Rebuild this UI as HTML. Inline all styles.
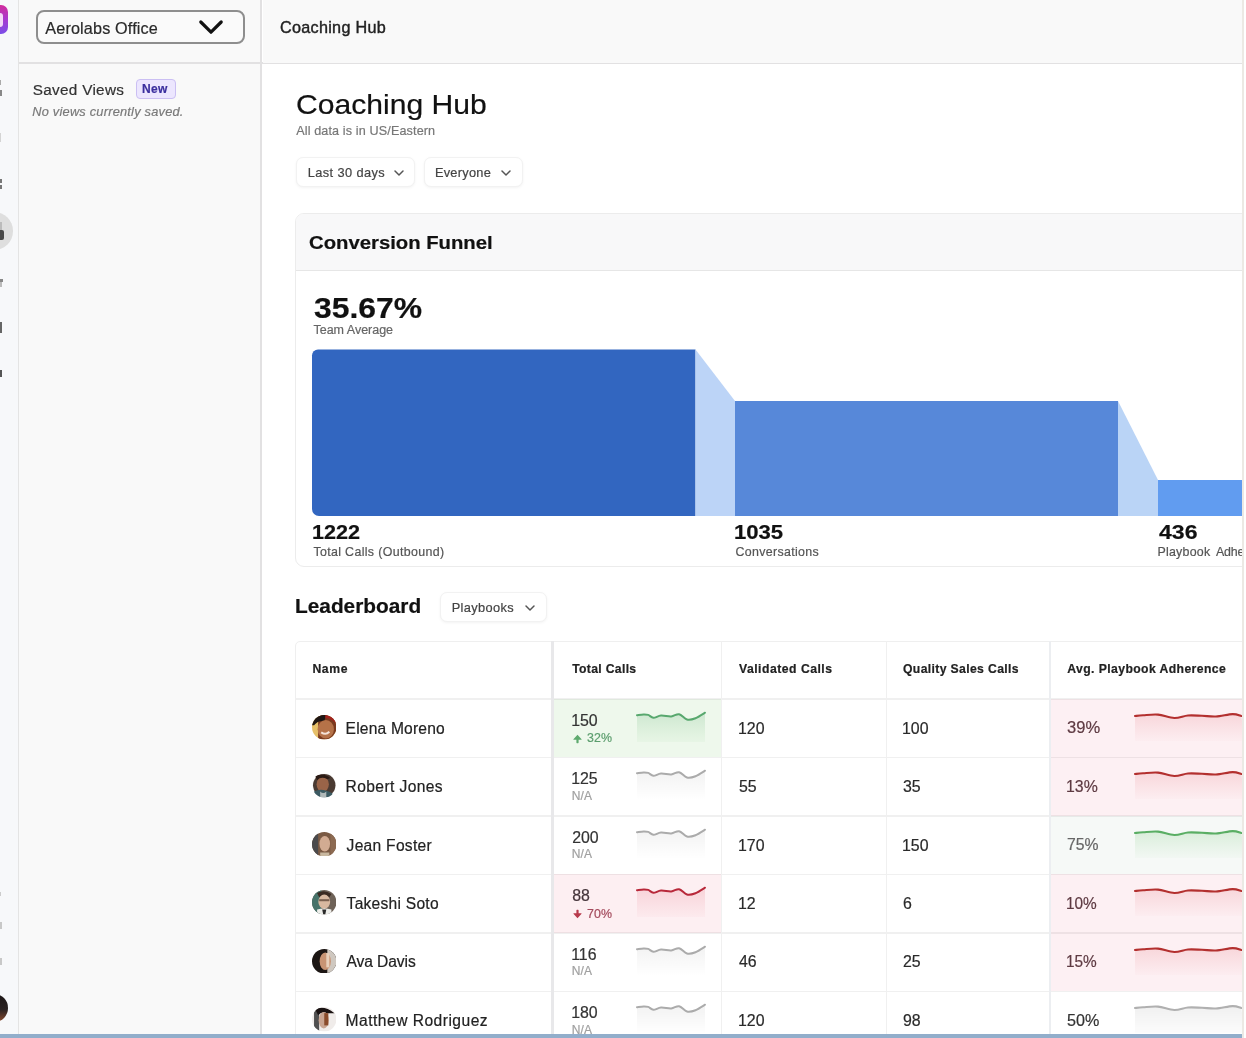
<!DOCTYPE html>
<html><head><meta charset="utf-8"><title>Coaching Hub</title><style>
html,body{margin:0;padding:0;}
body{width:1246px;height:1038px;overflow:hidden;position:relative;background:#fff;font-family:"Liberation Sans",sans-serif;}
#root{position:absolute;left:0;top:0;width:1246px;height:1038px;overflow:hidden;will-change:transform;}
.t{position:absolute;white-space:nowrap;-webkit-text-stroke:0.2px currentColor;}
.b{position:absolute;box-sizing:content-box;}
.av{border-radius:50%;}
.av0{background:radial-gradient(circle at 50% 55%,#c98a60 0%,#a8643c 45%,#7a3b22 70%),#8a4a2a;box-shadow:inset 4px 2px 0 #e0c070;}
.av1{background:radial-gradient(circle at 45% 50%,#8a5a40 0%,#5a3828 45%,#2d2422 70%,#4a6670 100%);}
.av2{background:radial-gradient(ellipse at 50% 50%,#c9a08a 0%,#a57858 35%,#5a3a2a 65%,#3a2a22 100%);}
.av3{background:radial-gradient(ellipse at 50% 50%,#e6d2c0 0%,#b09080 35%,#405a55 70%,#6a8a80 100%);}
.av4{background:radial-gradient(ellipse at 55% 50%,#d6b8a0 0%,#9a7058 35%,#2a201c 70%,#1a1412 100%);}
.av5{background:radial-gradient(ellipse at 55% 55%,#e0d0c8 0%,#a08878 35%,#3a3030 70%,#d8d8d8 100%);}
</style></head>
<body><div id="root">
<div class="b" style="left:0px;top:0px;width:18px;height:1034px;background:#f7f8fa;"></div>
<div class="b" style="left:18px;top:0px;width:1px;height:1034px;background:#e4e4e4;"></div>
<div class="b" style="left:-20px;top:5px;width:28px;height:29px;border-radius:7px;background:linear-gradient(180deg,#d22b9c 0%,#a73ad0 50%,#7a4ee8 100%);"></div>
<div class="b" style="left:0px;top:12.5px;width:2.8px;height:14.5px;background:#f3d8f7;border-radius:0 3px 3px 0;"></div>
<div class="b" style="left:0px;top:80px;width:1px;height:4.5px;background:#aaa;"></div>
<div class="b" style="left:0px;top:90px;width:1.5px;height:5.5px;background:#888;"></div>
<div class="b" style="left:0px;top:133px;width:1px;height:9px;background:#d4d4d4;"></div>
<div class="b" style="left:0px;top:179px;width:1.5px;height:4px;background:#777;"></div>
<div class="b" style="left:0px;top:184.5px;width:1.5px;height:4.5px;background:#777;"></div>
<div class="b" style="left:0px;top:279px;width:3px;height:3px;background:#888;"></div>
<div class="b" style="left:0px;top:282px;width:1.5px;height:5px;background:#bbb;"></div>
<div class="b" style="left:0px;top:322px;width:1.8px;height:11px;background:#666;"></div>
<div class="b" style="left:0px;top:370px;width:2px;height:7px;background:#555;"></div>
<div class="b" style="left:0px;top:892px;width:1px;height:4px;background:#ccc;"></div>
<div class="b" style="left:0px;top:922px;width:1.5px;height:7px;background:#c8c8c8;"></div>
<div class="b" style="left:0px;top:958px;width:1.5px;height:7px;background:#c8c8c8;"></div>
<div class="b" style="left:-24.6px;top:212.2px;width:37.6px;height:37.6px;border-radius:50%;background:#dedede;"></div>
<div class="b" style="left:0px;top:222px;width:2px;height:8px;background:#bbb;"></div>
<div class="b" style="left:0px;top:230px;width:3.5px;height:9.7px;background:#4a4a4a;border-radius:0 2px 2px 0;"></div>
<div class="b" style="left:-19px;top:994px;width:27px;height:28px;border-radius:50%;background:linear-gradient(180deg,#1c1616 0%,#2a2222 55%,#8a4a2e 100%);"></div>
<div class="b" style="left:19px;top:0px;width:242px;height:1034px;background:#f9f9f9;"></div>
<div class="b" style="left:260px;top:0px;width:2px;height:1034px;background:#e2e1e2;"></div>
<div class="b" style="left:19px;top:62.2px;width:1223px;height:1.5px;background:#e2e1e2;"></div>
<div class="b" style="left:36px;top:10px;width:209px;height:33.5px;box-sizing:border-box;border:2px solid #8e8e8e;border-radius:8px;background:#fafafa;"></div>
<div class="t" style="left:45.30px;top:20.29px;font-size:16.2px;line-height:16.2px;font-weight:400;color:#2a2a2a;letter-spacing:0.15px;">Aerolabs Office</div>
<svg class="b" style="left:197px;top:18px" width="30" height="19" viewBox="0 0 30 19"><path d="M3.8 4 L14 14.2 L24.2 4" fill="none" stroke="#111" stroke-width="3.2" stroke-linecap="round" stroke-linejoin="round"/></svg>
<div class="t" style="left:32.70px;top:81.65px;font-size:15.3px;line-height:15.3px;font-weight:400;color:#333;letter-spacing:0.31px;">Saved Views</div>
<div class="b" style="left:135.5px;top:78.5px;width:38px;height:18px;border:1px solid #cbbff3;border-radius:4px;background:#ece6fe;"></div>
<div class="t" style="left:142.00px;top:83.34px;font-size:12.0px;line-height:12.0px;font-weight:700;color:#3b2f9e;letter-spacing:0.33px;">New</div>
<div class="t" style="left:32.30px;top:106.46px;font-size:12.8px;line-height:12.8px;font-weight:400;color:#7a7a7a;font-style:italic;letter-spacing:0.22px;">No views currently saved.</div>
<div class="b" style="left:263px;top:0px;width:979px;height:63px;background:#f9f9f9;"></div>
<div class="t" style="left:279.90px;top:18.79px;font-size:16.2px;line-height:16.2px;font-weight:400;color:#222;letter-spacing:0.30px;-webkit-text-stroke:0.4px #222;">Coaching Hub</div>
<div class="b" style="left:263px;top:64px;width:979px;height:970px;background:#ffffff;"></div>
<div class="t" style="left:295.61px;top:91.24px;font-size:27.6px;line-height:27.6px;font-weight:400;color:#111;transform:scaleX(1.0909);transform-origin:0 0;">Coaching Hub</div>
<div class="t" style="left:296.20px;top:125.13px;font-size:12.6px;line-height:12.6px;font-weight:400;color:#777;letter-spacing:0.13px;">All data is in US/Eastern</div>
<div class="b" style="left:296px;top:157px;width:117px;height:28px;border:1px solid #f2f2f2;border-radius:7px;background:#fff;box-shadow:0 1px 3px rgba(0,0,0,0.05);"></div>
<div class="t" style="left:307.70px;top:166.86px;font-size:12.8px;line-height:12.8px;font-weight:400;color:#444;letter-spacing:0.40px;">Last 30 days</div>
<svg class="b" style="left:393px;top:168px" width="12" height="10" viewBox="0 0 12 10"><path d="M2 3 L6 7 L10 3" fill="none" stroke="#555" stroke-width="1.5" stroke-linecap="round" stroke-linejoin="round"/></svg>
<div class="b" style="left:424px;top:157px;width:97px;height:28px;border:1px solid #f2f2f2;border-radius:7px;background:#fff;box-shadow:0 1px 3px rgba(0,0,0,0.05);"></div>
<div class="t" style="left:434.90px;top:166.86px;font-size:12.8px;line-height:12.8px;font-weight:400;color:#444;letter-spacing:0.27px;">Everyone</div>
<svg class="b" style="left:499.5px;top:168px" width="12" height="10" viewBox="0 0 12 10"><path d="M2 3 L6 7 L10 3" fill="none" stroke="#555" stroke-width="1.5" stroke-linecap="round" stroke-linejoin="round"/></svg>
<div class="b" style="left:295px;top:213px;width:960px;height:352px;border:1.5px solid #ececec;border-radius:9px;background:#fff;overflow:hidden;"><div style="position:absolute;left:0;top:0;right:0;height:56px;background:#f8f8f9;border-bottom:1px solid #e6e6e6;"></div></div>
<div class="t" style="left:308.80px;top:233.66px;font-size:18.6px;line-height:18.6px;font-weight:700;color:#111;transform:scaleX(1.0908);transform-origin:0 0;">Conversion Funnel</div>
<div class="t" style="left:313.50px;top:293.92px;font-size:28.8px;line-height:28.8px;font-weight:700;color:#111;transform:scaleX(1.1065);transform-origin:0 0;">35.67%</div>
<div class="t" style="left:313.50px;top:324.32px;font-size:12.5px;line-height:12.5px;font-weight:400;color:#666;letter-spacing:-0.01px;">Team Average</div>
<svg class="b" style="left:263px;top:340px" width="979" height="190" viewBox="263 340 979 190"><path d="M312 355.5 A6 6 0 0 1 318 349.5 L695.5 349.5 L695.5 516 L319 516 A7 7 0 0 1 312 509 Z" fill="#3266c0"/><path d="M695.5 349.5 L735 401 L735 516 L695.5 516 Z" fill="#bcd4f7"/><rect x="735" y="401" width="383" height="115" fill="#5788d9"/><path d="M1118 401 L1158 480 L1158 516 L1118 516 Z" fill="#bad4f6"/><rect x="1158" y="480" width="90" height="36" fill="#619cf0"/></svg>
<div class="t" style="left:311.70px;top:523.12px;font-size:19.7px;line-height:19.7px;font-weight:700;color:#111;transform:scaleX(1.0969);transform-origin:0 0;">1222</div>
<div class="t" style="left:313.40px;top:545.60px;font-size:12.4px;line-height:12.4px;font-weight:400;color:#555;letter-spacing:0.35px;">Total Calls (Outbound)</div>
<div class="t" style="left:734.48px;top:523.32px;font-size:19.7px;line-height:19.7px;font-weight:700;color:#111;transform:scaleX(1.1226);transform-origin:0 0;">1035</div>
<div class="t" style="left:735.60px;top:545.90px;font-size:12.4px;line-height:12.4px;font-weight:400;color:#555;letter-spacing:0.33px;">Conversations</div>
<div class="t" style="left:1158.50px;top:523.12px;font-size:19.7px;line-height:19.7px;font-weight:700;color:#111;transform:scaleX(1.1703);transform-origin:0 0;">436</div>
<div class="t" style="left:1157.50px;top:545.90px;font-size:12.4px;line-height:12.4px;font-weight:400;color:#555;letter-spacing:0.23px;">Playbook</div>
<div class="t" style="left:1215.90px;top:545.90px;font-size:12.4px;line-height:12.4px;font-weight:400;color:#555;letter-spacing:-0.13px;">Adherence</div>
<div class="t" style="left:295.43px;top:597.38px;font-size:19.4px;line-height:19.4px;font-weight:700;color:#111;transform:scaleX(1.0743);transform-origin:0 0;">Leaderboard</div>
<div class="b" style="left:440px;top:592px;width:105px;height:28px;border:1px solid #f2f2f2;border-radius:7px;background:#fff;box-shadow:0 1px 3px rgba(0,0,0,0.05);"></div>
<div class="t" style="left:451.70px;top:602.16px;font-size:12.8px;line-height:12.8px;font-weight:400;color:#444;letter-spacing:0.38px;">Playbooks</div>
<svg class="b" style="left:523.5px;top:603px" width="12" height="10" viewBox="0 0 12 10"><path d="M2 3 L6 7 L10 3" fill="none" stroke="#555" stroke-width="1.5" stroke-linecap="round" stroke-linejoin="round"/></svg>
<div class="b" style="left:295px;top:641px;width:960px;height:400px;border:1.5px solid #efefef;border-radius:5px;background:#fff;"></div>
<div class="t" style="left:312.40px;top:663.07px;font-size:12.2px;line-height:12.2px;font-weight:700;color:#222;letter-spacing:0.66px;">Name</div>
<div class="t" style="left:572.20px;top:663.07px;font-size:12.2px;line-height:12.2px;font-weight:700;color:#222;letter-spacing:0.32px;">Total Calls</div>
<div class="t" style="left:739.00px;top:663.07px;font-size:12.2px;line-height:12.2px;font-weight:700;color:#222;letter-spacing:0.50px;">Validated Calls</div>
<div class="t" style="left:903.00px;top:663.07px;font-size:12.2px;line-height:12.2px;font-weight:700;color:#222;letter-spacing:0.36px;">Quality Sales Calls</div>
<div class="t" style="left:1067.30px;top:663.07px;font-size:12.2px;line-height:12.2px;font-weight:700;color:#222;letter-spacing:0.41px;">Avg. Playbook Adherence</div>
<div class="b" style="left:553px;top:699.0px;width:168px;height:58.46px;background:#eef8ec;"></div>
<div class="b" style="left:1051px;top:699.0px;width:200px;height:58.46px;background:#fdf0f3;"></div>
<svg class="b" style="left:311.7px;top:715.00px;filter:blur(0.35px)" width="24.5" height="24.5" viewBox="0 0 24 24"><defs><clipPath id="c0"><circle cx="12" cy="12" r="12"/></clipPath></defs><g clip-path="url(#c0)"><rect width="24" height="24" fill="#e6c069"/><rect x="6" width="18" height="24" fill="#7a3a1e"/><path d="M0 0 H14 L12 6 Q6 5 2 10 H0 Z" fill="#1e1614"/><path d="M13 0 H24 V9 Q19 3 13 3 Z" fill="#a3221e"/><ellipse cx="13.5" cy="14" rx="8" ry="9" fill="#b57248"/><path d="M9 17 Q13.5 20 17 16.5" stroke="#f4e2d6" stroke-width="2" fill="none"/></g></svg>
<div class="t" style="left:345.60px;top:720.59px;font-size:15.6px;line-height:15.6px;font-weight:400;color:#222;letter-spacing:0.18px;">Elena Moreno</div>
<div class="t" style="left:571.20px;top:712.74px;font-size:15.9px;line-height:15.9px;font-weight:400;color:#333;">150</div>
<svg class="b" style="left:572px;top:733.50px" width="11" height="10" viewBox="0 0 11 10"><path d="M5.5 0.8 L9.6 5.2 Q9.8 5.8 9.1 5.8 H6.6 V8.6 Q6.6 9.2 6 9.2 H5 Q4.4 9.2 4.4 8.6 V5.8 H1.9 Q1.2 5.8 1.4 5.2 Z" fill="#5eaa6e"/></svg>
<div class="t" style="left:586.90px;top:732.30px;font-size:12.4px;line-height:12.4px;font-weight:400;color:#5c9e6e;letter-spacing:0.16px;">32%</div>
<svg class="b" style="left:634.6px;top:699.00px" width="72" height="46" viewBox="-2 0 72 46"><defs><linearGradient id="g0" x1="0" y1="0" x2="0" y2="1"><stop offset="0" stop-color="rgba(88,168,110,0.22)"/><stop offset="1" stop-color="rgba(120,200,120,0.06)"/></linearGradient></defs><path d="M0.00 16.20 C1.10 16.07 4.73 15.45 6.60 15.40 C8.47 15.35 9.57 15.33 11.20 15.90 C12.83 16.47 14.27 18.70 16.40 18.80 C18.53 18.90 21.03 16.73 24.00 16.50 C26.97 16.27 31.18 17.62 34.20 17.40 C37.22 17.18 39.47 14.68 42.10 15.20 C44.73 15.72 47.27 19.83 50.00 20.50 C52.73 21.17 55.50 20.33 58.50 19.20 C61.50 18.07 66.42 14.62 68.00 13.70 L68 43 L0 43 Z" fill="url(#g0)"/><path d="M0.00 16.20 C1.10 16.07 4.73 15.45 6.60 15.40 C8.47 15.35 9.57 15.33 11.20 15.90 C12.83 16.47 14.27 18.70 16.40 18.80 C18.53 18.90 21.03 16.73 24.00 16.50 C26.97 16.27 31.18 17.62 34.20 17.40 C37.22 17.18 39.47 14.68 42.10 15.20 C44.73 15.72 47.27 19.83 50.00 20.50 C52.73 21.17 55.50 20.33 58.50 19.20 C61.50 18.07 66.42 14.62 68.00 13.70" fill="none" stroke="#58a86e" stroke-width="2" stroke-linecap="round"/></svg>
<div class="t" style="left:738.00px;top:720.64px;font-size:15.9px;line-height:15.9px;font-weight:400;color:#2a2a2a;">120</div>
<div class="t" style="left:902.00px;top:720.64px;font-size:15.9px;line-height:15.9px;font-weight:400;color:#2a2a2a;">100</div>
<div class="t" style="left:1067.30px;top:720.24px;font-size:15.9px;line-height:15.9px;font-weight:400;color:#5e3a42;transform:scaleX(1.0418);transform-origin:0 0;">39%</div>
<svg class="b" style="left:1133.2px;top:699.00px" width="112" height="46" viewBox="-2 0 112 46"><defs><linearGradient id="h0" x1="0" y1="0" x2="0" y2="1"><stop offset="0" stop-color="rgba(220,80,90,0.16)"/><stop offset="1" stop-color="rgba(230,90,100,0.02)"/></linearGradient></defs><path d="M0.00 17.00 C1.33 16.88 4.17 16.53 8.00 16.30 C11.83 16.07 17.78 15.15 23.00 15.60 C28.22 16.05 34.30 18.85 39.30 19.00 C44.30 19.15 48.38 16.87 53.00 16.50 C57.62 16.13 62.33 16.63 67.00 16.80 C71.67 16.97 75.90 17.78 81.00 17.50 C86.10 17.22 93.38 15.18 97.60 15.10 C101.82 15.02 104.85 16.68 106.30 17.00 L110 42 L0 42 Z" fill="url(#h0)"/><path d="M0.00 17.00 C1.33 16.88 4.17 16.53 8.00 16.30 C11.83 16.07 17.78 15.15 23.00 15.60 C28.22 16.05 34.30 18.85 39.30 19.00 C44.30 19.15 48.38 16.87 53.00 16.50 C57.62 16.13 62.33 16.63 67.00 16.80 C71.67 16.97 75.90 17.78 81.00 17.50 C86.10 17.22 93.38 15.18 97.60 15.10 C101.82 15.02 104.85 16.68 106.30 17.00" fill="none" stroke="#b3302f" stroke-width="2.1" stroke-linecap="round"/></svg>
<div class="b" style="left:1051px;top:757.46px;width:200px;height:58.46px;background:#fdf0f3;"></div>
<svg class="b" style="left:311.7px;top:773.46px;filter:blur(0.35px)" width="24.5" height="24.5" viewBox="0 0 24 24"><defs><clipPath id="c1"><circle cx="12" cy="12" r="12"/></clipPath></defs><g clip-path="url(#c1)"><rect width="24" height="24" fill="#fbfbfb"/><circle cx="12" cy="12" r="11" fill="#4a3a32"/><ellipse cx="10.5" cy="11" rx="6" ry="7.5" fill="#9a6448"/><path d="M3 3 Q11 -1 18 5 L15 6 Q9 3 5 7 Z" fill="#2a1a14"/><path d="M2 18 Q10 14 20 20 V24 H2 Z" fill="#3c5a62"/><path d="M8 18 Q11 21 14 18 V24 H8 Z" fill="#b0b8b8"/></g></svg>
<div class="t" style="left:345.60px;top:779.05px;font-size:15.6px;line-height:15.6px;font-weight:400;color:#222;letter-spacing:0.39px;">Robert Jones</div>
<div class="t" style="left:571.20px;top:771.20px;font-size:15.9px;line-height:15.9px;font-weight:400;color:#333;">125</div>
<div class="t" style="left:571.70px;top:789.70px;font-size:12.0px;line-height:12.0px;font-weight:400;color:#a0a0a0;letter-spacing:0.15px;">N/A</div>
<svg class="b" style="left:634.6px;top:757.46px" width="72" height="46" viewBox="-2 0 72 46"><defs><linearGradient id="g1" x1="0" y1="0" x2="0" y2="1"><stop offset="0" stop-color="rgba(0,0,0,0.05)"/><stop offset="1" stop-color="rgba(0,0,0,0.0)"/></linearGradient></defs><path d="M0.00 16.20 C1.10 16.07 4.73 15.45 6.60 15.40 C8.47 15.35 9.57 15.33 11.20 15.90 C12.83 16.47 14.27 18.70 16.40 18.80 C18.53 18.90 21.03 16.73 24.00 16.50 C26.97 16.27 31.18 17.62 34.20 17.40 C37.22 17.18 39.47 14.68 42.10 15.20 C44.73 15.72 47.27 19.83 50.00 20.50 C52.73 21.17 55.50 20.33 58.50 19.20 C61.50 18.07 66.42 14.62 68.00 13.70 L68 43 L0 43 Z" fill="url(#g1)"/><path d="M0.00 16.20 C1.10 16.07 4.73 15.45 6.60 15.40 C8.47 15.35 9.57 15.33 11.20 15.90 C12.83 16.47 14.27 18.70 16.40 18.80 C18.53 18.90 21.03 16.73 24.00 16.50 C26.97 16.27 31.18 17.62 34.20 17.40 C37.22 17.18 39.47 14.68 42.10 15.20 C44.73 15.72 47.27 19.83 50.00 20.50 C52.73 21.17 55.50 20.33 58.50 19.20 C61.50 18.07 66.42 14.62 68.00 13.70" fill="none" stroke="#ababab" stroke-width="2" stroke-linecap="round"/></svg>
<div class="t" style="left:739.00px;top:779.10px;font-size:15.9px;line-height:15.9px;font-weight:400;color:#2a2a2a;">55</div>
<div class="t" style="left:903.00px;top:779.10px;font-size:15.9px;line-height:15.9px;font-weight:400;color:#2a2a2a;">35</div>
<div class="t" style="left:1066.30px;top:778.70px;font-size:15.9px;line-height:15.9px;font-weight:400;color:#5e3a42;transform:scaleX(0.9975);transform-origin:0 0;">13%</div>
<svg class="b" style="left:1133.2px;top:757.46px" width="112" height="46" viewBox="-2 0 112 46"><defs><linearGradient id="h1" x1="0" y1="0" x2="0" y2="1"><stop offset="0" stop-color="rgba(220,80,90,0.16)"/><stop offset="1" stop-color="rgba(230,90,100,0.02)"/></linearGradient></defs><path d="M0.00 17.00 C1.33 16.88 4.17 16.53 8.00 16.30 C11.83 16.07 17.78 15.15 23.00 15.60 C28.22 16.05 34.30 18.85 39.30 19.00 C44.30 19.15 48.38 16.87 53.00 16.50 C57.62 16.13 62.33 16.63 67.00 16.80 C71.67 16.97 75.90 17.78 81.00 17.50 C86.10 17.22 93.38 15.18 97.60 15.10 C101.82 15.02 104.85 16.68 106.30 17.00 L110 42 L0 42 Z" fill="url(#h1)"/><path d="M0.00 17.00 C1.33 16.88 4.17 16.53 8.00 16.30 C11.83 16.07 17.78 15.15 23.00 15.60 C28.22 16.05 34.30 18.85 39.30 19.00 C44.30 19.15 48.38 16.87 53.00 16.50 C57.62 16.13 62.33 16.63 67.00 16.80 C71.67 16.97 75.90 17.78 81.00 17.50 C86.10 17.22 93.38 15.18 97.60 15.10 C101.82 15.02 104.85 16.68 106.30 17.00" fill="none" stroke="#b3302f" stroke-width="2.1" stroke-linecap="round"/></svg>
<div class="b" style="left:1051px;top:815.92px;width:200px;height:58.46px;background:#f6f9f7;"></div>
<svg class="b" style="left:311.7px;top:831.92px;filter:blur(0.35px)" width="24.5" height="24.5" viewBox="0 0 24 24"><defs><clipPath id="c2"><circle cx="12" cy="12" r="12"/></clipPath></defs><g clip-path="url(#c2)"><rect width="24" height="24" fill="#7a5a44"/><rect width="6" height="24" fill="#4a4a4c"/><ellipse cx="12.5" cy="11.5" rx="5.2" ry="7.5" fill="#d2ab92"/><rect x="18" width="6" height="24" fill="#8c6a52"/><path d="M8 20 H17 V24 H8 Z" fill="#c8b8a0"/></g></svg>
<div class="t" style="left:346.60px;top:837.51px;font-size:15.6px;line-height:15.6px;font-weight:400;color:#222;letter-spacing:0.27px;">Jean Foster</div>
<div class="t" style="left:572.20px;top:829.66px;font-size:15.9px;line-height:15.9px;font-weight:400;color:#333;">200</div>
<div class="t" style="left:571.70px;top:848.16px;font-size:12.0px;line-height:12.0px;font-weight:400;color:#a0a0a0;letter-spacing:0.15px;">N/A</div>
<svg class="b" style="left:634.6px;top:815.92px" width="72" height="46" viewBox="-2 0 72 46"><defs><linearGradient id="g2" x1="0" y1="0" x2="0" y2="1"><stop offset="0" stop-color="rgba(0,0,0,0.05)"/><stop offset="1" stop-color="rgba(0,0,0,0.0)"/></linearGradient></defs><path d="M0.00 16.20 C1.10 16.07 4.73 15.45 6.60 15.40 C8.47 15.35 9.57 15.33 11.20 15.90 C12.83 16.47 14.27 18.70 16.40 18.80 C18.53 18.90 21.03 16.73 24.00 16.50 C26.97 16.27 31.18 17.62 34.20 17.40 C37.22 17.18 39.47 14.68 42.10 15.20 C44.73 15.72 47.27 19.83 50.00 20.50 C52.73 21.17 55.50 20.33 58.50 19.20 C61.50 18.07 66.42 14.62 68.00 13.70 L68 43 L0 43 Z" fill="url(#g2)"/><path d="M0.00 16.20 C1.10 16.07 4.73 15.45 6.60 15.40 C8.47 15.35 9.57 15.33 11.20 15.90 C12.83 16.47 14.27 18.70 16.40 18.80 C18.53 18.90 21.03 16.73 24.00 16.50 C26.97 16.27 31.18 17.62 34.20 17.40 C37.22 17.18 39.47 14.68 42.10 15.20 C44.73 15.72 47.27 19.83 50.00 20.50 C52.73 21.17 55.50 20.33 58.50 19.20 C61.50 18.07 66.42 14.62 68.00 13.70" fill="none" stroke="#ababab" stroke-width="2" stroke-linecap="round"/></svg>
<div class="t" style="left:738.00px;top:837.56px;font-size:15.9px;line-height:15.9px;font-weight:400;color:#2a2a2a;">170</div>
<div class="t" style="left:902.00px;top:837.56px;font-size:15.9px;line-height:15.9px;font-weight:400;color:#2a2a2a;">150</div>
<div class="t" style="left:1067.30px;top:837.16px;font-size:15.9px;line-height:15.9px;font-weight:400;color:#666;transform:scaleX(0.9913);transform-origin:0 0;">75%</div>
<svg class="b" style="left:1133.2px;top:815.92px" width="112" height="46" viewBox="-2 0 112 46"><defs><linearGradient id="h2" x1="0" y1="0" x2="0" y2="1"><stop offset="0" stop-color="rgba(100,190,100,0.2)"/><stop offset="1" stop-color="rgba(120,200,120,0.03)"/></linearGradient></defs><path d="M0.00 17.00 C1.33 16.88 4.17 16.53 8.00 16.30 C11.83 16.07 17.78 15.15 23.00 15.60 C28.22 16.05 34.30 18.85 39.30 19.00 C44.30 19.15 48.38 16.87 53.00 16.50 C57.62 16.13 62.33 16.63 67.00 16.80 C71.67 16.97 75.90 17.78 81.00 17.50 C86.10 17.22 93.38 15.18 97.60 15.10 C101.82 15.02 104.85 16.68 106.30 17.00 L110 42 L0 42 Z" fill="url(#h2)"/><path d="M0.00 17.00 C1.33 16.88 4.17 16.53 8.00 16.30 C11.83 16.07 17.78 15.15 23.00 15.60 C28.22 16.05 34.30 18.85 39.30 19.00 C44.30 19.15 48.38 16.87 53.00 16.50 C57.62 16.13 62.33 16.63 67.00 16.80 C71.67 16.97 75.90 17.78 81.00 17.50 C86.10 17.22 93.38 15.18 97.60 15.10 C101.82 15.02 104.85 16.68 106.30 17.00" fill="none" stroke="#5aae64" stroke-width="2.1" stroke-linecap="round"/></svg>
<div class="b" style="left:553px;top:874.38px;width:168px;height:58.46px;background:#fdeff2;"></div>
<div class="b" style="left:1051px;top:874.38px;width:200px;height:58.46px;background:#fdf0f3;"></div>
<svg class="b" style="left:311.7px;top:890.38px;filter:blur(0.35px)" width="24.5" height="24.5" viewBox="0 0 24 24"><defs><clipPath id="c3"><circle cx="12" cy="12" r="12"/></clipPath></defs><g clip-path="url(#c3)"><rect width="24" height="24" fill="#6e6258"/><rect width="9" height="24" fill="#47736a"/><path d="M5 3 Q12 -1 19 4 L17 7 Q12 4 7 7 Z" fill="#3a2a22"/><ellipse cx="12" cy="11.5" rx="5.8" ry="7" fill="#d8b8a0"/><rect x="7" y="9" width="10" height="2" fill="#7a6050"/><path d="M5 19 Q12 17 19 19 V24 H5 Z" fill="#eeeeea"/><path d="M10 19 H14 L13 24 H11 Z" fill="#2a2a2a"/></g></svg>
<div class="t" style="left:346.60px;top:895.97px;font-size:15.6px;line-height:15.6px;font-weight:400;color:#222;letter-spacing:0.25px;">Takeshi Soto</div>
<div class="t" style="left:572.20px;top:888.12px;font-size:15.9px;line-height:15.9px;font-weight:400;color:#45353b;">88</div>
<svg class="b" style="left:572px;top:908.88px" width="11" height="10" viewBox="0 0 11 10"><path d="M5.5 9.2 L9.6 4.8 Q9.8 4.2 9.1 4.2 H6.6 V1.4 Q6.6 0.8 6 0.8 H5 Q4.4 0.8 4.4 1.4 V4.2 H1.9 Q1.2 4.2 1.4 4.8 Z" fill="#b83a4c"/></svg>
<div class="t" style="left:586.90px;top:908.08px;font-size:12.4px;line-height:12.4px;font-weight:400;color:#a44b5d;letter-spacing:0.16px;">70%</div>
<svg class="b" style="left:634.6px;top:874.38px" width="72" height="46" viewBox="-2 0 72 46"><defs><linearGradient id="g3" x1="0" y1="0" x2="0" y2="1"><stop offset="0" stop-color="rgba(220,60,80,0.16)"/><stop offset="1" stop-color="rgba(230,80,100,0.03)"/></linearGradient></defs><path d="M0.00 16.20 C1.10 16.07 4.73 15.45 6.60 15.40 C8.47 15.35 9.57 15.33 11.20 15.90 C12.83 16.47 14.27 18.70 16.40 18.80 C18.53 18.90 21.03 16.73 24.00 16.50 C26.97 16.27 31.18 17.62 34.20 17.40 C37.22 17.18 39.47 14.68 42.10 15.20 C44.73 15.72 47.27 19.83 50.00 20.50 C52.73 21.17 55.50 20.33 58.50 19.20 C61.50 18.07 66.42 14.62 68.00 13.70 L68 43 L0 43 Z" fill="url(#g3)"/><path d="M0.00 16.20 C1.10 16.07 4.73 15.45 6.60 15.40 C8.47 15.35 9.57 15.33 11.20 15.90 C12.83 16.47 14.27 18.70 16.40 18.80 C18.53 18.90 21.03 16.73 24.00 16.50 C26.97 16.27 31.18 17.62 34.20 17.40 C37.22 17.18 39.47 14.68 42.10 15.20 C44.73 15.72 47.27 19.83 50.00 20.50 C52.73 21.17 55.50 20.33 58.50 19.20 C61.50 18.07 66.42 14.62 68.00 13.70" fill="none" stroke="#b8283a" stroke-width="2" stroke-linecap="round"/></svg>
<div class="t" style="left:738.00px;top:896.02px;font-size:15.9px;line-height:15.9px;font-weight:400;color:#2a2a2a;">12</div>
<div class="t" style="left:903.00px;top:896.02px;font-size:15.9px;line-height:15.9px;font-weight:400;color:#2a2a2a;">6</div>
<div class="t" style="left:1066.33px;top:895.62px;font-size:15.9px;line-height:15.9px;font-weight:400;color:#5e3a42;transform:scaleX(0.9682);transform-origin:0 0;">10%</div>
<svg class="b" style="left:1133.2px;top:874.38px" width="112" height="46" viewBox="-2 0 112 46"><defs><linearGradient id="h3" x1="0" y1="0" x2="0" y2="1"><stop offset="0" stop-color="rgba(220,80,90,0.16)"/><stop offset="1" stop-color="rgba(230,90,100,0.02)"/></linearGradient></defs><path d="M0.00 17.00 C1.33 16.88 4.17 16.53 8.00 16.30 C11.83 16.07 17.78 15.15 23.00 15.60 C28.22 16.05 34.30 18.85 39.30 19.00 C44.30 19.15 48.38 16.87 53.00 16.50 C57.62 16.13 62.33 16.63 67.00 16.80 C71.67 16.97 75.90 17.78 81.00 17.50 C86.10 17.22 93.38 15.18 97.60 15.10 C101.82 15.02 104.85 16.68 106.30 17.00 L110 42 L0 42 Z" fill="url(#h3)"/><path d="M0.00 17.00 C1.33 16.88 4.17 16.53 8.00 16.30 C11.83 16.07 17.78 15.15 23.00 15.60 C28.22 16.05 34.30 18.85 39.30 19.00 C44.30 19.15 48.38 16.87 53.00 16.50 C57.62 16.13 62.33 16.63 67.00 16.80 C71.67 16.97 75.90 17.78 81.00 17.50 C86.10 17.22 93.38 15.18 97.60 15.10 C101.82 15.02 104.85 16.68 106.30 17.00" fill="none" stroke="#b3302f" stroke-width="2.1" stroke-linecap="round"/></svg>
<div class="b" style="left:1051px;top:932.84px;width:200px;height:58.46px;background:#fdf0f3;"></div>
<svg class="b" style="left:311.7px;top:948.84px;filter:blur(0.35px)" width="24.5" height="24.5" viewBox="0 0 24 24"><defs><clipPath id="c4"><circle cx="12" cy="12" r="12"/></clipPath></defs><g clip-path="url(#c4)"><rect width="24" height="24" fill="#1c1614"/><rect x="15" width="9" height="24" fill="#cfc8c0"/><ellipse cx="13" cy="12" rx="5.5" ry="8.5" fill="#c89474"/><rect x="14" y="4" width="3" height="14" fill="#e8d0bc"/></g></svg>
<div class="t" style="left:346.60px;top:954.43px;font-size:15.6px;line-height:15.6px;font-weight:400;color:#222;letter-spacing:-0.10px;">Ava Davis</div>
<div class="t" style="left:571.20px;top:946.58px;font-size:15.9px;line-height:15.9px;font-weight:400;color:#333;">116</div>
<div class="t" style="left:571.70px;top:965.08px;font-size:12.0px;line-height:12.0px;font-weight:400;color:#a0a0a0;letter-spacing:0.15px;">N/A</div>
<svg class="b" style="left:634.6px;top:932.84px" width="72" height="46" viewBox="-2 0 72 46"><defs><linearGradient id="g4" x1="0" y1="0" x2="0" y2="1"><stop offset="0" stop-color="rgba(0,0,0,0.05)"/><stop offset="1" stop-color="rgba(0,0,0,0.0)"/></linearGradient></defs><path d="M0.00 16.20 C1.10 16.07 4.73 15.45 6.60 15.40 C8.47 15.35 9.57 15.33 11.20 15.90 C12.83 16.47 14.27 18.70 16.40 18.80 C18.53 18.90 21.03 16.73 24.00 16.50 C26.97 16.27 31.18 17.62 34.20 17.40 C37.22 17.18 39.47 14.68 42.10 15.20 C44.73 15.72 47.27 19.83 50.00 20.50 C52.73 21.17 55.50 20.33 58.50 19.20 C61.50 18.07 66.42 14.62 68.00 13.70 L68 43 L0 43 Z" fill="url(#g4)"/><path d="M0.00 16.20 C1.10 16.07 4.73 15.45 6.60 15.40 C8.47 15.35 9.57 15.33 11.20 15.90 C12.83 16.47 14.27 18.70 16.40 18.80 C18.53 18.90 21.03 16.73 24.00 16.50 C26.97 16.27 31.18 17.62 34.20 17.40 C37.22 17.18 39.47 14.68 42.10 15.20 C44.73 15.72 47.27 19.83 50.00 20.50 C52.73 21.17 55.50 20.33 58.50 19.20 C61.50 18.07 66.42 14.62 68.00 13.70" fill="none" stroke="#ababab" stroke-width="2" stroke-linecap="round"/></svg>
<div class="t" style="left:739.00px;top:954.48px;font-size:15.9px;line-height:15.9px;font-weight:400;color:#2a2a2a;">46</div>
<div class="t" style="left:903.00px;top:954.48px;font-size:15.9px;line-height:15.9px;font-weight:400;color:#2a2a2a;">25</div>
<div class="t" style="left:1066.33px;top:954.08px;font-size:15.9px;line-height:15.9px;font-weight:400;color:#5e3a42;transform:scaleX(0.9682);transform-origin:0 0;">15%</div>
<svg class="b" style="left:1133.2px;top:932.84px" width="112" height="46" viewBox="-2 0 112 46"><defs><linearGradient id="h4" x1="0" y1="0" x2="0" y2="1"><stop offset="0" stop-color="rgba(220,80,90,0.16)"/><stop offset="1" stop-color="rgba(230,90,100,0.02)"/></linearGradient></defs><path d="M0.00 17.00 C1.33 16.88 4.17 16.53 8.00 16.30 C11.83 16.07 17.78 15.15 23.00 15.60 C28.22 16.05 34.30 18.85 39.30 19.00 C44.30 19.15 48.38 16.87 53.00 16.50 C57.62 16.13 62.33 16.63 67.00 16.80 C71.67 16.97 75.90 17.78 81.00 17.50 C86.10 17.22 93.38 15.18 97.60 15.10 C101.82 15.02 104.85 16.68 106.30 17.00 L110 42 L0 42 Z" fill="url(#h4)"/><path d="M0.00 17.00 C1.33 16.88 4.17 16.53 8.00 16.30 C11.83 16.07 17.78 15.15 23.00 15.60 C28.22 16.05 34.30 18.85 39.30 19.00 C44.30 19.15 48.38 16.87 53.00 16.50 C57.62 16.13 62.33 16.63 67.00 16.80 C71.67 16.97 75.90 17.78 81.00 17.50 C86.10 17.22 93.38 15.18 97.60 15.10 C101.82 15.02 104.85 16.68 106.30 17.00" fill="none" stroke="#b3302f" stroke-width="2.1" stroke-linecap="round"/></svg>
<svg class="b" style="left:311.7px;top:1007.30px;filter:blur(0.35px)" width="24.5" height="24.5" viewBox="0 0 24 24"><defs><clipPath id="c5"><circle cx="12" cy="12" r="12"/></clipPath></defs><g clip-path="url(#c5)"><rect width="24" height="24" fill="#f0ecea"/><rect x="2" width="5" height="24" fill="#505050"/><path d="M3 2 Q12 -2 22 6 L15 6 Q9 4 6 8 Z" fill="#1a1212"/><ellipse cx="11.5" cy="13" rx="5" ry="8" fill="#c9a592"/><rect x="12" y="6" width="4" height="12" fill="#8a4c2c"/></g></svg>
<div class="t" style="left:345.60px;top:1012.89px;font-size:15.6px;line-height:15.6px;font-weight:400;color:#222;letter-spacing:0.48px;">Matthew Rodriguez</div>
<div class="t" style="left:571.20px;top:1005.04px;font-size:15.9px;line-height:15.9px;font-weight:400;color:#333;">180</div>
<div class="t" style="left:571.70px;top:1023.54px;font-size:12.0px;line-height:12.0px;font-weight:400;color:#a0a0a0;letter-spacing:0.15px;">N/A</div>
<svg class="b" style="left:634.6px;top:991.30px" width="72" height="46" viewBox="-2 0 72 46"><defs><linearGradient id="g5" x1="0" y1="0" x2="0" y2="1"><stop offset="0" stop-color="rgba(0,0,0,0.05)"/><stop offset="1" stop-color="rgba(0,0,0,0.0)"/></linearGradient></defs><path d="M0.00 16.20 C1.10 16.07 4.73 15.45 6.60 15.40 C8.47 15.35 9.57 15.33 11.20 15.90 C12.83 16.47 14.27 18.70 16.40 18.80 C18.53 18.90 21.03 16.73 24.00 16.50 C26.97 16.27 31.18 17.62 34.20 17.40 C37.22 17.18 39.47 14.68 42.10 15.20 C44.73 15.72 47.27 19.83 50.00 20.50 C52.73 21.17 55.50 20.33 58.50 19.20 C61.50 18.07 66.42 14.62 68.00 13.70 L68 43 L0 43 Z" fill="url(#g5)"/><path d="M0.00 16.20 C1.10 16.07 4.73 15.45 6.60 15.40 C8.47 15.35 9.57 15.33 11.20 15.90 C12.83 16.47 14.27 18.70 16.40 18.80 C18.53 18.90 21.03 16.73 24.00 16.50 C26.97 16.27 31.18 17.62 34.20 17.40 C37.22 17.18 39.47 14.68 42.10 15.20 C44.73 15.72 47.27 19.83 50.00 20.50 C52.73 21.17 55.50 20.33 58.50 19.20 C61.50 18.07 66.42 14.62 68.00 13.70" fill="none" stroke="#ababab" stroke-width="2" stroke-linecap="round"/></svg>
<div class="t" style="left:738.00px;top:1012.94px;font-size:15.9px;line-height:15.9px;font-weight:400;color:#2a2a2a;">120</div>
<div class="t" style="left:903.00px;top:1012.94px;font-size:15.9px;line-height:15.9px;font-weight:400;color:#2a2a2a;">98</div>
<div class="t" style="left:1067.30px;top:1012.54px;font-size:15.9px;line-height:15.9px;font-weight:400;color:#333;transform:scaleX(1.0166);transform-origin:0 0;">50%</div>
<svg class="b" style="left:1133.2px;top:991.30px" width="112" height="46" viewBox="-2 0 112 46"><defs><linearGradient id="h5" x1="0" y1="0" x2="0" y2="1"><stop offset="0" stop-color="rgba(0,0,0,0.06)"/><stop offset="1" stop-color="rgba(0,0,0,0.01)"/></linearGradient></defs><path d="M0.00 17.00 C1.33 16.88 4.17 16.53 8.00 16.30 C11.83 16.07 17.78 15.15 23.00 15.60 C28.22 16.05 34.30 18.85 39.30 19.00 C44.30 19.15 48.38 16.87 53.00 16.50 C57.62 16.13 62.33 16.63 67.00 16.80 C71.67 16.97 75.90 17.78 81.00 17.50 C86.10 17.22 93.38 15.18 97.60 15.10 C101.82 15.02 104.85 16.68 106.30 17.00 L110 42 L0 42 Z" fill="url(#h5)"/><path d="M0.00 17.00 C1.33 16.88 4.17 16.53 8.00 16.30 C11.83 16.07 17.78 15.15 23.00 15.60 C28.22 16.05 34.30 18.85 39.30 19.00 C44.30 19.15 48.38 16.87 53.00 16.50 C57.62 16.13 62.33 16.63 67.00 16.80 C71.67 16.97 75.90 17.78 81.00 17.50 C86.10 17.22 93.38 15.18 97.60 15.10 C101.82 15.02 104.85 16.68 106.30 17.00" fill="none" stroke="#b0b0b0" stroke-width="2.1" stroke-linecap="round"/></svg>
<div class="b" style="left:296px;top:698.4px;width:946px;height:1.5px;background:rgba(0,0,0,0.058);"></div>
<div class="b" style="left:296px;top:756.86px;width:946px;height:1.5px;background:rgba(0,0,0,0.058);"></div>
<div class="b" style="left:296px;top:815.32px;width:946px;height:1.5px;background:rgba(0,0,0,0.058);"></div>
<div class="b" style="left:296px;top:873.78px;width:946px;height:1.5px;background:rgba(0,0,0,0.058);"></div>
<div class="b" style="left:296px;top:932.24px;width:946px;height:1.5px;background:rgba(0,0,0,0.058);"></div>
<div class="b" style="left:296px;top:990.7px;width:946px;height:1.5px;background:rgba(0,0,0,0.058);"></div>
<div class="b" style="left:551px;top:641px;width:2.5px;height:400px;background:#e8e8ea;"></div>
<div class="b" style="left:721px;top:641px;width:1.2px;height:400px;background:#f0f0f0;"></div>
<div class="b" style="left:885.5px;top:641px;width:1.2px;height:400px;background:#f0f0f0;"></div>
<div class="b" style="left:1048.5px;top:641px;width:2.5px;height:400px;background:#eceef1;"></div>
<div class="b" style="left:1242px;top:0px;width:1.5px;height:1038px;background:#ece9e4;"></div>
<div class="b" style="left:1243.5px;top:0px;width:3px;height:1038px;background:#ffffff;"></div>
<div class="b" style="left:0px;top:1034px;width:1242px;height:4px;background:#92aecb;"></div>
</div></body></html>
